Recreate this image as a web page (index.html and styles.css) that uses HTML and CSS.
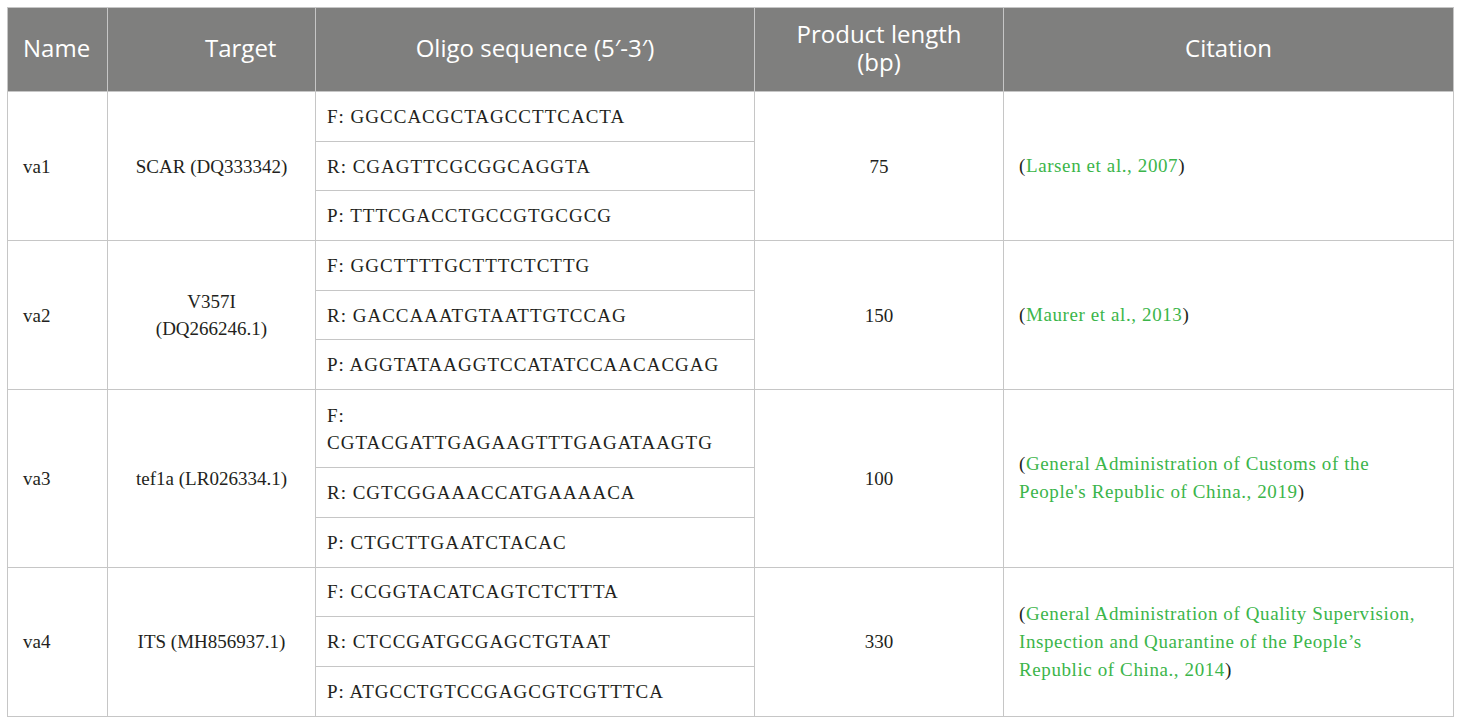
FILE: index.html
```html
<!DOCTYPE html>
<html>
<head>
<meta charset="utf-8">
<link rel="stylesheet" href="styles.css">
</head>
<body>
<table class="primers">
  <colgroup>
    <col class="c-name"><col class="c-target"><col class="c-oligo"><col class="c-len"><col class="c-cit">
  </colgroup>
  <thead>
    <tr>
      <th class="h-name">Name</th>
      <th class="h-target">Target</th>
      <th>Oligo sequence (5′-3′)</th>
      <th>Product length<br>(bp)</th>
      <th>Citation</th>
    </tr>
  </thead>
  <tbody>
    <tr class="sub">
      <td rowspan="3" class="name">va1</td>
      <td rowspan="3" class="center">SCAR (DQ333342)</td>
      <td class="oligo">F: GGCCACGCTAGCCTTCACTA</td>
      <td rowspan="3" class="center">75</td>
      <td rowspan="3" class="cit">(<span class="link">Larsen et al., 2007</span>)</td>
    </tr>
    <tr class="sub"><td class="oligo">R: CGAGTTCGCGGCAGGTA</td></tr>
    <tr class="sub"><td class="oligo">P: TTTCGACCTGCCGTGCGCG</td></tr>

    <tr class="sub">
      <td rowspan="3" class="name">va2</td>
      <td rowspan="3" class="center">V357I<br>(DQ266246.1)</td>
      <td class="oligo">F: GGCTTTTGCTTTCTCTTG</td>
      <td rowspan="3" class="center">150</td>
      <td rowspan="3" class="cit">(<span class="link">Maurer et al., 2013</span>)</td>
    </tr>
    <tr class="sub"><td class="oligo">R: GACCAAATGTAATTGTCCAG</td></tr>
    <tr class="sub"><td class="oligo">P: AGGTATAAGGTCCATATCCAACACGAG</td></tr>

    <tr class="tall">
      <td rowspan="3" class="name">va3</td>
      <td rowspan="3" class="center">tef1a (LR026334.1)</td>
      <td class="oligo">F:<br>CGTACGATTGAGAAGTTTGAGATAAGTG</td>
      <td rowspan="3" class="center">100</td>
      <td rowspan="3" class="cit">(<span class="link">General Administration of Customs of the<br>People's Republic of China., 2019</span>)</td>
    </tr>
    <tr class="sub"><td class="oligo">R: CGTCGGAAACCATGAAAACA</td></tr>
    <tr class="sub"><td class="oligo">P: CTGCTTGAATCTACAC</td></tr>

    <tr class="sub">
      <td rowspan="3" class="name">va4</td>
      <td rowspan="3" class="center">ITS (MH856937.1)</td>
      <td class="oligo">F: CCGGTACATCAGTCTCTTTA</td>
      <td rowspan="3" class="center">330</td>
      <td rowspan="3" class="cit">(<span class="link">General Administration of Quality Supervision,<br>Inspection and Quarantine of the People’s<br>Republic of China., 2014</span>)</td>
    </tr>
    <tr class="sub"><td class="oligo">R: CTCCGATGCGAGCTGTAAT</td></tr>
    <tr class="sub"><td class="oligo">P: ATGCCTGTCCGAGCGTCGTTTCA</td></tr>
  </tbody>
</table>
</body>
</html>
```

FILE: styles.css
```css
html, body {
  margin: 0;
  padding: 0;
  background: #ffffff;
}

.primers {
  margin: 7px 0 0 7px;
  width: 1446px;
  border-collapse: collapse;
  table-layout: fixed;
  font-family: "Liberation Serif", "DejaVu Serif", serif;
  font-size: 19px;
  color: #231f20;
}

.c-name { width: 100px; }
.c-target { width: 208px; }
.c-oligo { width: 439px; }
.c-len { width: 249px; }
.c-cit { width: 450px; }

.primers th,
.primers td {
  border: 1px solid #c6c6c6;
}

.primers thead th {
  background: #7f7f7e;
  color: #ffffff;
  font-family: "Open Sans", "Liberation Sans", sans-serif;
  font-weight: 400;
  font-size: 24px;
  line-height: 28px;
  height: 80px;
  padding: 0 0 3px 0;
  text-align: center;
}

.primers thead th.h-name {
  text-align: left;
  padding-left: 15px;
}

.primers thead th.h-target {
  text-align: left;
  padding-left: 97px;
}

.sub td { height: 48.7px; }
.tall td { height: 77px; }

.primers td {
  padding: 0;
  line-height: 27px;
  vertical-align: middle;
}

.name { padding-left: 15px !important; }
.center { text-align: center; }
.oligo {
  padding-left: 11px !important;
  letter-spacing: 1px;
}
.cit {
  padding: 0 10px 0 15px !important;
  letter-spacing: 0.6px;
  line-height: 28px !important;
  white-space: nowrap;
}

.link { color: #3bb54a; }
```
